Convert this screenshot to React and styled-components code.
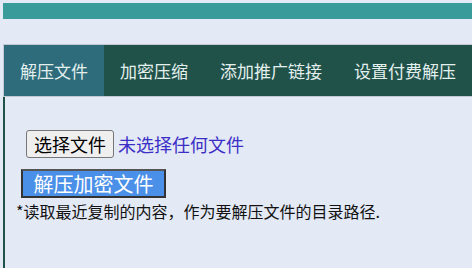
import React from "react";
import styled, { createGlobalStyle } from "styled-components";

const Global = createGlobalStyle`
  html, body {
    margin: 0;
    padding: 0;
    background: #e3e9f5;
    font-family: "Noto Sans CJK SC", "Noto Sans", sans-serif;
  }
`;

const Page = styled.div`
  padding: 3px 0 0 3px;
  height: 265px;
  display: flex;
  flex-direction: column;
`;

const TopBar = styled.div`
  height: 16px;
  background: #3a9b9b;
`;

const Panel = styled.div`
  margin-top: 25px;
  flex: 1;
  display: flex;
  flex-direction: column;
`;

const Tabs = styled.div`
  display: flex;
  height: 51px;
  background: #20524a;
  border-top: 1px solid #c3c9d2;
  border-left: 1px solid #c3c9d2;
  border-bottom: 1px solid #c3c9d2;
`;

const Tab = styled.div`
  display: flex;
  align-items: center;
  padding: 0 16px;
  font-size: 17px;
  color: #e4f0ee;
  background: ${(p) => (p.$active ? "#2e6b7b" : "transparent")};
  white-space: nowrap;
`;

const Body = styled.div`
  flex: 1;
  border-left: 2px solid #20524a;
  padding: 33px 0 0 11px;
`;

const FileRow = styled.div`
  display: flex;
  align-items: center;
  gap: 4px;
  margin-left: 10px;
  font-size: 18px;
`;

const PickButton = styled.span`
  display: inline-flex;
  align-items: center;
  justify-content: center;
  box-sizing: border-box;
  width: 88px;
  height: 28px;
  border: 1px solid #767676;
  border-radius: 3px;
  background: #efefef;
  color: #000;
  line-height: 1;
`;

const FileName = styled.span`
  color: #3c2fc6;
  line-height: 1;
`;

const Submit = styled.button`
  display: block;
  box-sizing: border-box;
  margin: 11px 0 0 5px;
  width: 145px;
  height: 29px;
  padding: 0;
  border: 2px solid #333;
  border-top-color: #555;
  background: #4a8fe8;
  color: #fff;
  font-family: inherit;
  font-size: 20px;
  line-height: 1;
`;

const Note = styled.p`
  margin: 4px 0 0 0;
  font-size: 16px;
  line-height: 18px;
  color: #111;
`;

export default function App() {
  const tabs = ["解压文件", "加密压缩", "添加推广链接", "设置付费解压"];
  return (
    <>
      <Global />
      <Page>
        <TopBar />
        <Panel>
          <Tabs>
            {tabs.map((t, i) => (
              <Tab key={t} $active={i === 0}>
                {t}
              </Tab>
            ))}
          </Tabs>
          <Body>
            <FileRow>
              <PickButton>选择文件</PickButton>
              <FileName>未选择任何文件</FileName>
            </FileRow>
            <Submit>解压加密文件</Submit>
            <Note>*读取最近复制的内容，作为要解压文件的目录路径.</Note>
          </Body>
        </Panel>
      </Page>
    </>
  );
}
